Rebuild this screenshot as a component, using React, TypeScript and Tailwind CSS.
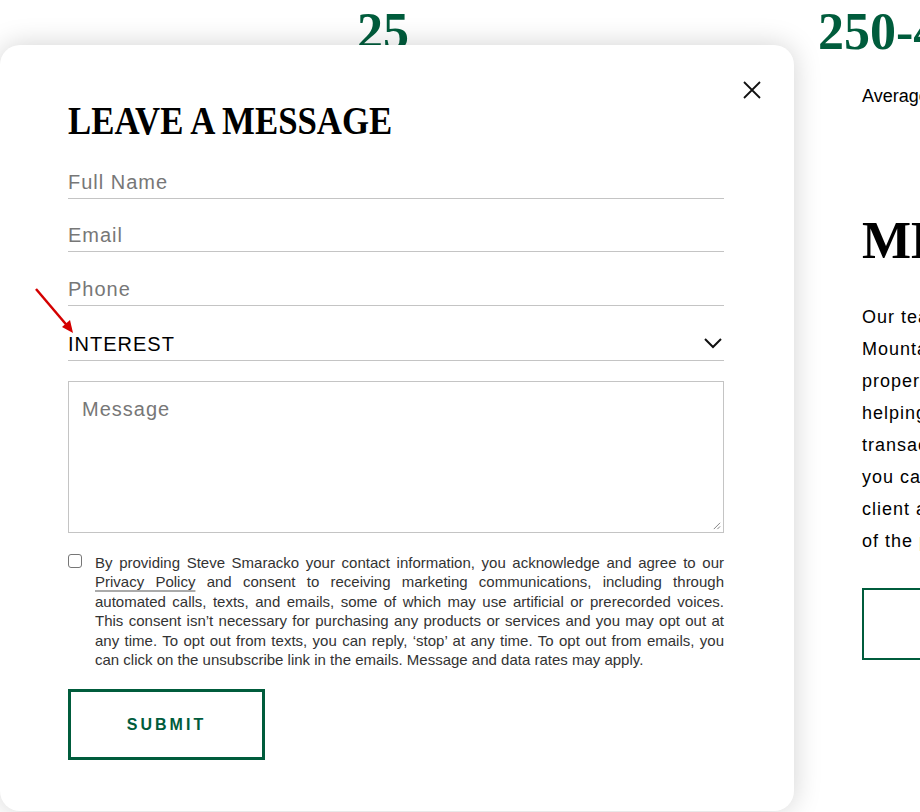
import React from 'react';

const serif = "font-['Liberation_Serif','Times_New_Roman',serif]";
const sans = "font-['Liberation_Sans',Arial,sans-serif]";

const fieldCls = "flex items-center h-[34px] border-b border-[#c4c4c4] text-[20px] tracking-[1px] text-[#777]";

export default function App() {
  return (
    <div className={`relative w-[920px] h-[812px] overflow-hidden bg-white ${sans}`}>
      {/* Página de fondo */}
      <div className="flex">
        <div className="w-[818px] shrink-0 pl-[357px] pt-[6px]">
          <div className={`${serif} text-[52px] font-bold leading-none text-[#005c3c]`}>25</div>
        </div>
        <div className="w-[400px] shrink-0 pt-[6px] whitespace-nowrap">
          <div className={`${serif} text-[52px] font-bold leading-none text-[#005c3c]`}>250-400</div>
          <div className="pl-[44px] pt-[25px] text-[18px] text-black">Average Price</div>
          <div className={`pl-[44px] pt-[105px] ${serif} text-[52px] font-bold leading-none text-black`}>MEET THE TEAM</div>
          <div className="pl-[44px] pt-[34px] text-[18px] leading-[32px] tracking-[1px] text-black">
            <div>Our team is proud to serve</div>
            <div>Mountain Lakes and beyond</div>
            <div>property owners, buyers and</div>
            <div>helping you with every</div>
            <div>transaction so that</div>
            <div>you can feel confident as a</div>
            <div>client at every stage</div>
            <div>of the process.</div>
          </div>
          <div className="ml-[44px] mt-[31px] w-[200px] h-[72px] border-2 border-[#005c3c]" />
        </div>
      </div>

      {/* Modal */}
      <div className="absolute left-0 top-[45px] w-[794px] h-[766px] bg-white rounded-[20px] shadow-[0_0_28px_rgba(0,0,0,0.18)] pl-[68px] pr-[70px] pt-[56px]">
        <button className="absolute right-[33px] top-[36px] w-[18px] h-[18px]">
          <svg viewBox="0 0 18 18" className="w-[18px] h-[18px]" fill="none" stroke="#111" strokeWidth="1.8">
            <path d="M1 1L17 17M17 1L1 17" />
          </svg>
        </button>

        <h2 className={`${serif} text-[40px] font-bold leading-none text-black scale-x-[0.87] origin-left whitespace-nowrap`}>
          LEAVE A MESSAGE
        </h2>

        <div className="mt-[24px]">
          <div className={fieldCls}>Full Name</div>
          <div className={`${fieldCls} mt-[19px]`}>Email</div>
          <div className={`${fieldCls} mt-[20px]`}>Phone</div>
          <div className={`${fieldCls} mt-[21px] justify-between text-black`}>
            <span>INTEREST</span>
            <svg viewBox="0 0 18 11" className="w-[18px] h-[11px] mr-[2px]" fill="none" stroke="#111" strokeWidth="2">
              <path d="M1 1L9 9L17 1" />
            </svg>
          </div>
        </div>

        <div className="relative mt-[20px] h-[152px] border border-[#c4c4c4] px-[13px] pt-[17px] text-[20px] tracking-[1px] text-[#777] leading-none">
          Message
          <svg viewBox="0 0 10 10" className="absolute right-[2px] bottom-[2px] w-[9px] h-[9px]" fill="none" stroke="#777" strokeWidth="1">
            <path d="M9 2L2 9M9 6L6 9" />
          </svg>
        </div>

        <div className="mt-[20px] flex gap-[13px]">
          <span className="mt-[1px] shrink-0 w-[14px] h-[14px] rounded-[3px] border border-[#767676] bg-white" />
          <p className="text-[15px] leading-[19.4px] text-[#333] text-justify">
            By providing Steve Smaracko your contact information, you acknowledge and agree to our{' '}
            <a className="underline decoration-[#aaa] decoration-2 underline-offset-[3px]">Privacy Policy</a> and consent to receiving marketing communications, including through automated calls, texts, and emails, some of which may use artificial or prerecorded voices. This consent isn’t necessary for purchasing any products or services and you may opt out at any time. To opt out from texts, you can reply, ‘stop’ at any time. To opt out from emails, you can click on the unsubscribe link in the emails. Message and data rates may apply.
          </p>
        </div>

        <button className="mt-[20px] w-[197px] h-[71px] border-[3px] border-[#005c3c] text-[16px] font-bold tracking-[3px] text-[#005c3c]">
          SUBMIT
        </button>
      </div>

      {/* Flecha roja */}
      <svg className="absolute left-[34px] top-[287px] w-[44px] h-[50px]" viewBox="0 0 44 50" fill="none">
        <path d="M2 2L36 42" stroke="#d40000" strokeWidth="2.5" />
        <path d="M39 46L28 40L36 33Z" fill="#d40000" />
      </svg>
    </div>
  );
}
